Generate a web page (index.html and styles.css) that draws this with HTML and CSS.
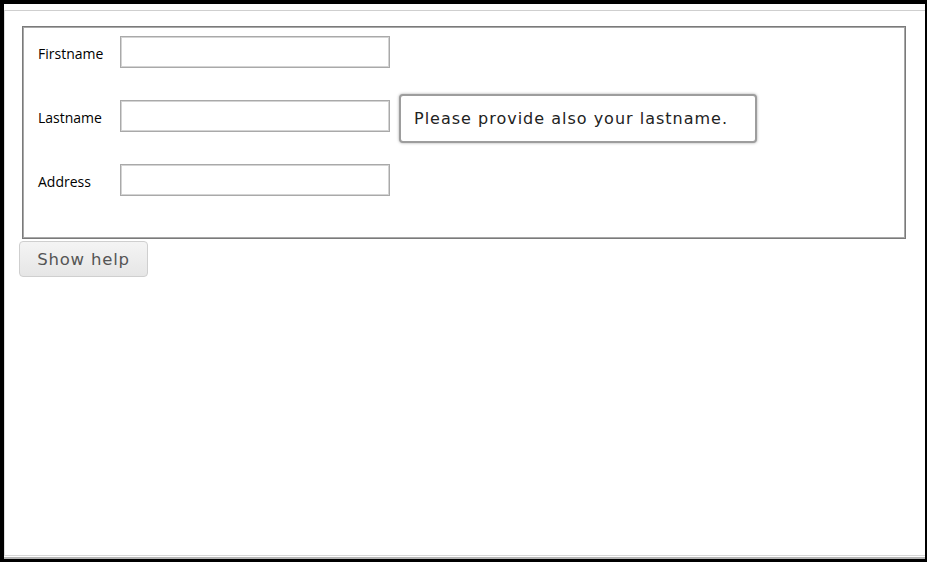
FILE: index.html
```html
<!DOCTYPE html>
<html>
<head>
<meta charset="utf-8">
<link rel="stylesheet" href="styles.css">
</head>
<body>
<div class="frame">
  <div class="page">
    <fieldset class="form-box">
      <div class="row">
        <label class="label">Firstname</label>
        <input class="field" type="text">
      </div>
      <div class="row">
        <label class="label">Lastname</label>
        <div class="field-wrap">
          <input class="field" type="text">
          <div class="tooltip">Please provide also your lastname.</div>
        </div>
      </div>
      <div class="row">
        <label class="label">Address</label>
        <input class="field" type="text">
      </div>
    </fieldset>
    <button class="help-btn" type="button">Show help</button>
  </div>
  <div class="frame-rule"></div>
</div>
</body>
</html>
```
FILE: styles.css
```css
html, body {
  margin: 0;
  padding: 0;
  background: #fff;
}
.frame {
  box-sizing: border-box;
  width: 927px;
  height: 562px;
  border-style: solid;
  border-color: #000;
  border-width: 4px 2px 3px 4px;
  padding-top: 6px;
  background: #fff;
}
.page {
  box-sizing: border-box;
  height: 546px;
  border-top: 1px solid #cfcfcf;
  border-left: 1px solid #dcdcdc;
  border-bottom: 1px solid #d8d8d8;
  display: flex;
  flex-direction: column;
  align-items: flex-start;
}
.frame-rule {
  margin-top: 1px;
  height: 2px;
  background: #b4b4b4;
}
.form-box {
  box-sizing: border-box;
  margin: 15px 0 0 17px;
  width: 884px;
  height: 213px;
  padding: 9px 15px 0 15px;
  border: 1px solid #7a7a7a;
  box-shadow: inset 0 0 0 1px #a8a8a8;
  display: flex;
  flex-direction: column;
  gap: 32px;
  min-width: 0;
}
.row {
  display: flex;
  align-items: center;
  height: 32px;
}
.label {
  width: 82px;
  padding-top: 3px;
  font-family: "Open Sans", sans-serif;
  font-size: 14px;
  color: #000;
}
.field-wrap {
  position: relative;
  display: flex;
}
.field {
  box-sizing: border-box;
  width: 270px;
  height: 32px;
  margin: 0;
  border: 1px solid #a9a9a9;
  box-shadow: inset 0 0 0 1px #d4d4d4;
  background: #fff;
  outline: none;
}
.tooltip {
  position: absolute;
  left: 279px;
  top: -6px;
  box-sizing: border-box;
  width: 358px;
  height: 49px;
  padding: 0 0 0 13px;
  display: flex;
  align-items: center;
  border: 2px solid #9d9d9d;
  border-radius: 4px;
  box-shadow: 0 0 3px rgba(0,0,0,0.35);
  background: #fff;
  font-family: "DejaVu Sans", sans-serif;
  font-size: 16px;
  letter-spacing: 1px;
  color: #222;
  white-space: nowrap;
}
.help-btn {
  box-sizing: border-box;
  margin: 2px 0 0 14px;
  width: 129px;
  height: 36px;
  padding: 0;
  border: 1px solid #cfcfcf;
  border-radius: 4px;
  background: linear-gradient(#f4f4f4, #e6e6e6);
  font-family: "DejaVu Sans", sans-serif;
  font-size: 16.5px;
  color: #555;
  letter-spacing: 0.8px;
}
```
